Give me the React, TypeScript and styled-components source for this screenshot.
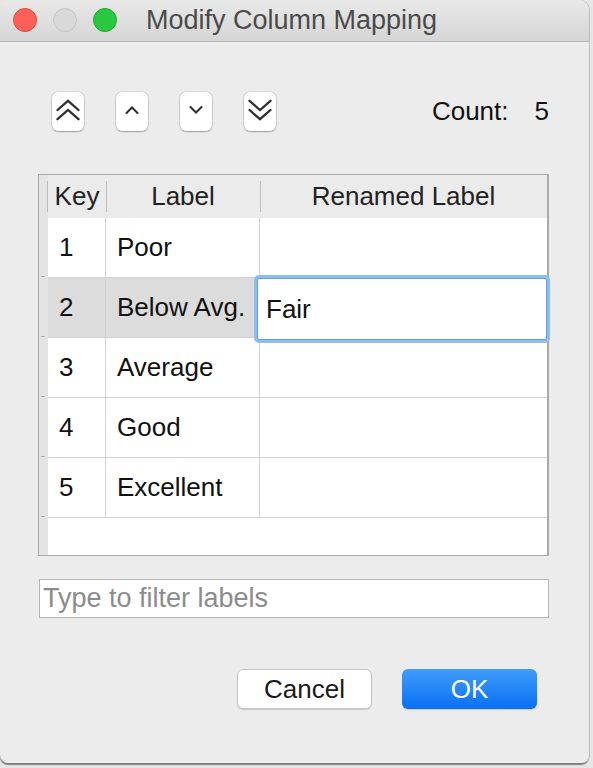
import React from "react";
import styled, { createGlobalStyle } from "styled-components";

const GlobalStyle = createGlobalStyle`
    html, body {
        margin: 0;
        padding: 0;
        background: #e2e2e2;
    }
    * {
        box-sizing: border-box;
    }
`;

const FONT = `"Liberation Sans", Arial, Helvetica, sans-serif`;

const Desktop = styled.div`
    width: 593px;
    height: 768px;
    overflow: hidden;
    background: #e6e6e6;
    font-family: ${FONT};
`;

const Window = styled.div`
    width: 589px;
    height: 763px;
    display: flex;
    flex-direction: column;
    background: #ececec;
    border-radius: 10px 10px 8px 8px;
    box-shadow: 1px 0 0 #bdbdbd, 0 2px 1px rgba(0, 0, 0, 0.45);
    overflow: hidden;
`;

const TitleBar = styled.div`
    height: 42px;
    flex-shrink: 0;
    display: flex;
    align-items: center;
    padding-left: 13px;
    background: linear-gradient(#e9e9e9, #d5d5d5);
    border-bottom: 1px solid #b8b8b8;
`;

const Lights = styled.div`
    display: flex;
    gap: 16px;
    margin-top: -1px;
`;

const Light = styled.span<{ $fill: string; $edge: string }>`
    width: 24px;
    height: 24px;
    border-radius: 50%;
    background: ${p => p.$fill};
    border: 1px solid ${p => p.$edge};
`;

const Title = styled.div`
    margin-left: 29px;
    font-size: 27px;
    color: #4b4b4b;
`;

const Content = styled.div`
    flex: 1;
    display: flex;
    flex-direction: column;
    padding: 50px 40px 0 38px;
`;

const Toolbar = styled.div`
    display: flex;
    align-items: center;
    padding-left: 14px;
    height: 39px;
`;

const MoveButtons = styled.div`
    display: flex;
    gap: 32px;
`;

const MoveButton = styled.button`
    width: 32px;
    height: 39px;
    padding: 0 0 3px;
    display: flex;
    align-items: center;
    justify-content: center;
    background: #ffffff;
    border: none;
    border-radius: 6px;
    box-shadow: 0 0 0 0.5px rgba(0, 0, 0, 0.18), 0 1px 1.5px rgba(0, 0, 0, 0.25);
    color: #2f2f2f;
`;

const Count = styled.div`
    margin-left: auto;
    display: flex;
    gap: 26px;
    font-size: 26px;
    color: #111;
`;

const TableFrame = styled.div`
    margin-top: 43px;
    height: 382px;
    display: flex;
    border: 1px solid #a9a9a9;
    border-right-width: 2px;
    background: #ffffff;
`;

const Gutter = styled.div`
    width: 9px;
    flex-shrink: 0;
    background: #e4e4e4;
    display: flex;
    flex-direction: column;
    padding-top: 42px;
`;

const GutterSlot = styled.div`
    height: 60px;
    position: relative;
    &::after {
        content: "";
        position: absolute;
        left: 2px;
        bottom: 0;
        width: 4px;
        height: 1px;
        background: #b0b0b0;
    }
`;

const Grid = styled.div`
    flex: 1;
    display: grid;
    grid-template-columns: 58px 154px 1fr;
    grid-auto-rows: 60px;
    grid-template-rows: 43px;
    align-content: start;
    font-size: 26px;
    color: #111;
`;

const HeadCell = styled.div<{ $first?: boolean }>`
    background: #ebebeb;
    display: flex;
    align-items: center;
    justify-content: center;
    position: relative;
    color: #222;
    &::before {
        content: "";
        position: absolute;
        left: ${p => (p.$first ? "-1px" : "0")};
        top: 6px;
        bottom: 6px;
        width: 1px;
        background: #bdbdbd;
    }
`;

const Cell = styled.div<{ $selected?: boolean; $last?: boolean }>`
    display: flex;
    align-items: center;
    padding-left: 11px;
    border-bottom: 1px solid #d2d2d2;
    border-right: ${p => (p.$last ? "none" : "1px solid #d2d2d2")};
    background: ${p => (p.$selected ? "#dcdcdc" : "#ffffff")};
    position: relative;
`;

const Editor = styled.div`
    position: absolute;
    left: -3px;
    right: 0;
    top: 0;
    bottom: -3px;
    display: flex;
    align-items: center;
    padding-left: 8px;
    background: #ffffff;
    border: 1px solid #5f9fea;
    box-shadow: 0 0 0 3px #8fbdf0;
    border-radius: 2px;
    z-index: 1;
`;

const FilterInput = styled.input`
    margin-top: 23px;
    margin-left: 1px;
    height: 39px;
    width: 510px;
    border: 1px solid #b5b5b5;
    background: #ffffff;
    font-family: ${FONT};
    font-size: 27px;
    padding: 0 3px;
    color: #111;
    outline: none;
    &::placeholder {
        color: #8c8c8c;
    }
`;

const Actions = styled.div`
    margin-top: 51px;
    display: flex;
    justify-content: flex-end;
    gap: 30px;
    padding-right: 12px;
`;

const ActionButton = styled.button<{ $primary?: boolean }>`
    width: 135px;
    height: 40px;
    border-radius: 6px;
    font-family: ${FONT};
    font-size: 26px;
    border: ${p => (p.$primary ? "none" : "1px solid #c6c6c6")};
    color: ${p => (p.$primary ? "#ffffff" : "#1a1a1a")};
    background: ${p => (p.$primary ? "linear-gradient(#3f9dfc, #0a6ff3)" : "#ffffff")};
    box-shadow: 0 1px 1px rgba(0, 0, 0, 0.15);
    padding: 0;
`;

const DoubleChevron = ({ up }: { up: boolean }) => (
    <svg width="24" height="22" viewBox="0 0 24 22" fill="none" stroke="currentColor" strokeWidth="2.3" strokeLinejoin="miter" strokeLinecap="round" style={{ transform: up ? "none" : "scaleY(-1)" }}>
        <path d="M1.5 11 L12 1.8 L22.5 11" />
        <path d="M1.5 20.2 L12 11 L22.5 20.2" />
    </svg>
);

const Chevron = ({ up }: { up: boolean }) => (
    <svg width="14" height="8" viewBox="0 0 14 8" fill="none" stroke="currentColor" strokeWidth="2" strokeLinecap="round" style={{ transform: up ? "none" : "scaleY(-1)" }}>
        <path d="M1.5 7 L7 1.5 L12.5 7" />
    </svg>
);

const rows = [
    { key: "1", label: "Poor", renamed: "" },
    { key: "2", label: "Below Avg.", renamed: "Fair" },
    { key: "3", label: "Average", renamed: "" },
    { key: "4", label: "Good", renamed: "" },
    { key: "5", label: "Excellent", renamed: "" },
];

export default function App() {
    const editing = 1;
    return (
        <Desktop>
            <GlobalStyle />
            <Window>
                <TitleBar>
                    <Lights>
                        <Light $fill="#fe5f57" $edge="#e2463f" />
                        <Light $fill="#d9d9d9" $edge="#c4c4c4" />
                        <Light $fill="#29c840" $edge="#1eab2d" />
                    </Lights>
                    <Title>Modify Column Mapping</Title>
                </TitleBar>
                <Content>
                    <Toolbar>
                        <MoveButtons>
                            <MoveButton><DoubleChevron up /></MoveButton>
                            <MoveButton><Chevron up /></MoveButton>
                            <MoveButton><Chevron up={false} /></MoveButton>
                            <MoveButton><DoubleChevron up={false} /></MoveButton>
                        </MoveButtons>
                        <Count>
                            <span>Count:</span>
                            <span>{rows.length}</span>
                        </Count>
                    </Toolbar>

                    <TableFrame>
                        <Gutter>
                            {rows.map(r => <GutterSlot key={r.key} />)}
                        </Gutter>
                        <Grid>
                            <HeadCell $first>Key</HeadCell>
                            <HeadCell>Label</HeadCell>
                            <HeadCell>Renamed Label</HeadCell>
                            {rows.map((r, i) => (
                                <React.Fragment key={r.key}>
                                    <Cell $selected={i === editing}>{r.key}</Cell>
                                    <Cell $selected={i === editing}>{r.label}</Cell>
                                    <Cell $last>
                                        {i === editing ? <Editor>{r.renamed}</Editor> : r.renamed}
                                    </Cell>
                                </React.Fragment>
                            ))}
                        </Grid>
                    </TableFrame>

                    <FilterInput placeholder="Type to filter labels" />

                    <Actions>
                        <ActionButton>Cancel</ActionButton>
                        <ActionButton $primary>OK</ActionButton>
                    </Actions>
                </Content>
            </Window>
        </Desktop>
    );
}
